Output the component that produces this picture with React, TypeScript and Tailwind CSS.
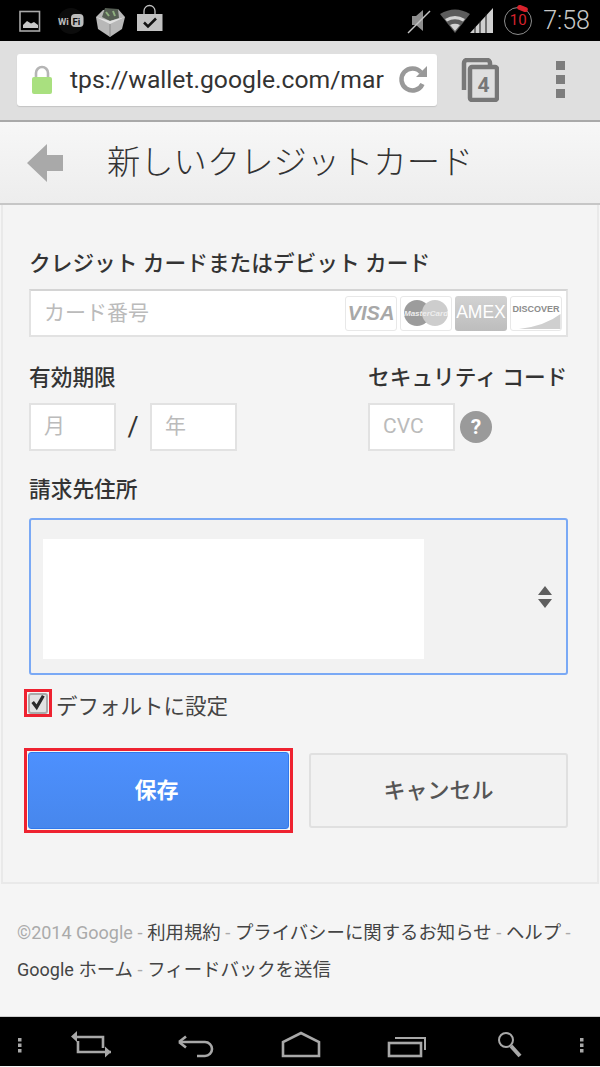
const font = { fontFamily: '"Roboto", "Noto Sans CJK JP", sans-serif' };

function StatusBar() {
  return (
    <div className="h-[41px] bg-black flex items-center shrink-0">
      {/* notification icons */}
      <svg width="200" height="41" viewBox="0 0 200 41" className="shrink-0">
        <rect x="20" y="11.5" width="19.5" height="19.5" fill="none" stroke="#a8a8a8" strokeWidth="1.6" />
        <path d="M23 28 v-3 l4 -4 l4 2.5 l3 -1.5 l4 3 v3z" fill="#c8c8c8" />
        <circle cx="71" cy="21" r="13" fill="#0c0c0c" />
        <text x="58" y="25" fontSize="9.5" fontWeight="700" fill="#bcbcbc" fontFamily="Roboto, sans-serif">Wi</text>
        <rect x="71" y="14" width="12.5" height="13" rx="4" fill="#bcbcbc" />
        <text x="72.5" y="25" fontSize="9.5" fontWeight="700" fill="#111" fontFamily="Roboto, sans-serif">Fi</text>
        <path d="M96 17 L103 10 L118 9 L125 17 L122 29 L110 37 L98 29z" fill="#b8b8b8" />
        <path d="M102 17 L105 8 L118 9 L119 18 L110 21z" fill="#565f54" />
        <path d="M106 12 l3 4 M113 11 l2 5" stroke="#8fb07f" strokeWidth="2" />
        <path d="M96 17 L110 24 L125 17 L110 21z" fill="#e2e2e2" />
        <path d="M110 24 V37" stroke="#8a8a8a" strokeWidth="1" />
        <path d="M137 14 H162.5 V31 H137z" fill="#c2c2c2" />
        <path d="M144 14 V11 a5.5 5.5 0 0 1 11 0 V14" fill="none" stroke="#c2c2c2" strokeWidth="1.3" />
        <path d="M144 22.5 L148 26.5 L156 18.5" fill="none" stroke="#111" strokeWidth="2.5" />
      </svg>
      <div className="flex-1" />
      {/* system icons */}
      <svg width="100" height="41" viewBox="0 0 100 41" className="shrink-0">
        <path d="M8 16 H12 L19 10 V31 L12 25 H8z" fill="#8e8e8e" />
        <path d="M4 33 L26 11" stroke="#c4c4c4" strokeWidth="1.4" />
        <path d="M36 14 Q51 5 66 14 L51 33z" fill="#5c5c5c" />
        <path d="M41 19 Q51 13 61 19 L59 21.5 Q51 17 43 21.5z" fill="#d4d4d4" />
        <path d="M46 25 Q51 22.5 56 25 L51 31z" fill="#d4d4d4" />
        <path d="M66 33 L89 8 V33z" fill="#d0d0d0" />
        <path d="M71 33 V26 M76 33 V21 M82 33 V13" stroke="#111" strokeWidth="1" />
      </svg>
      <div className="relative w-[28px] h-[28px] rounded-full border border-[#8d8d8d] flex items-center justify-center shrink-0 text-[#d8222c] text-[15px] leading-none">
        10
        <span className="absolute -top-[2px] left-[12px] w-[11px] h-[5px] rounded-full bg-[#d8222c] rotate-[20deg]" />
      </div>
      <span className="ml-[11px] mr-[10px] text-[#c8c8c8] text-[25px] font-light leading-none">7:58</span>
    </div>
  );
}

function BrowserBar() {
  return (
    <div className="h-[81px] bg-[#dfdfdf] border-b-[2px] border-[#a9a9a9] flex items-center shrink-0 pb-[2px]">
      <div className="ml-[17px] w-[420px] h-[52px] bg-white rounded-[3px] shadow-[0_1px_1px_#c4c4c4] flex items-center overflow-hidden">
        <svg width="22" height="31" viewBox="0 0 22 31" className="ml-[14px] shrink-0">
          <path d="M5 14 V9 a6 6 0 0 1 12 0 V14" fill="none" stroke="#b5b5b5" strokeWidth="2.6" />
          <rect x="1" y="13" width="20" height="17" rx="2" fill="#a9e07f" />
        </svg>
        <div className="ml-[17px] w-[315px] shrink-0 whitespace-nowrap text-[24.7px] leading-[30px] text-[#333]">
          tps://wallet.google.com/mar
        </div>
        <svg width="32" height="32" viewBox="0 0 32 32" className="ml-[12px] shrink-0">
          <path d="M25.5 20 A11 11 0 1 1 24 8.5" fill="none" stroke="#999" strokeWidth="4.5" />
          <path d="M19 13 H30 V2z" fill="#999" />
        </svg>
      </div>
      <svg width="38" height="44" viewBox="0 0 38 44" className="ml-[24px] shrink-0">
        <path d="M3 32 V5 a3 3 0 0 1 3 -3 H26 a3 3 0 0 1 3 3 V7" fill="none" stroke="#777" strokeWidth="4.5" />
        <rect x="9" y="9" width="27" height="33" rx="2" fill="#dfdfdf" stroke="#777" strokeWidth="4.5" />
        <text x="22.5" y="34" textAnchor="middle" fontSize="21" fontWeight="700" fill="#777" fontFamily="Roboto, sans-serif">4</text>
      </svg>
      <div className="ml-[57px] flex flex-col gap-[5px] shrink-0">
        <span className="w-[9px] h-[9px] bg-[#7d7d7d]" />
        <span className="w-[9px] h-[9px] bg-[#7d7d7d]" />
        <span className="w-[9px] h-[9px] bg-[#7d7d7d]" />
      </div>
    </div>
  );
}

function TitleBar() {
  return (
    <div className="h-[83px] border-b-[2px] border-[#c6c6c6] bg-gradient-to-b from-[#f7f7f7] to-[#ededed] flex items-center shrink-0">
      <svg width="36" height="38" viewBox="0 0 36 38" className="ml-[27px] shrink-0">
        <path d="M0 19 L20 0 V11 H36 V27 H20 V38z" fill="#a9a9a9" />
      </svg>
      <h1 className="ml-[44px] text-[33.3px] leading-none font-light text-[#333] whitespace-nowrap">新しいクレジットカード</h1>
    </div>
  );
}

function CardLogos() {
  const latin = { fontFamily: '"Liberation Sans", sans-serif' };
  return (
    <div className="flex gap-[3px] shrink-0 mr-[4px]">
      <div className="w-[52px] h-[35px] rounded-[3px] bg-white border border-[#e8e8e8] flex items-center justify-center text-[#a8a8a8] text-[20px] font-black italic leading-none" style={latin}>VISA</div>
      <div className="w-[52px] h-[35px] rounded-[3px] bg-white border border-[#e8e8e8] flex items-center justify-center">
        <svg width="44" height="26" viewBox="0 0 44 26">
          <circle cx="13" cy="13" r="13" fill="#9c9c9c" />
          <circle cx="31" cy="13" r="13" fill="#cdcdcd" />
          <text x="22" y="16" textAnchor="middle" fontSize="8" fontStyle="italic" fontWeight="700" fill="#eee" style={latin}>MasterCard</text>
        </svg>
      </div>
      <div className="w-[52px] h-[35px] rounded-[3px] bg-gradient-to-b from-[#d2d2d2] to-[#bdbdbd] flex items-center justify-center text-white text-[17.5px] leading-none" style={latin}>AMEX</div>
      <div className="relative w-[52px] h-[35px] rounded-[3px] bg-white border border-[#e8e8e8] flex justify-center pt-[8px] text-[#8c8c8c] text-[9px] font-bold leading-none" style={latin}>
        DISCOVER
        <svg width="50" height="33" viewBox="0 0 50 33" className="absolute left-0 top-0">
          <path d="M8 32 Q34 29 49.5 17 V32z" fill="#cfcfcf" />
        </svg>
      </div>
    </div>
  );
}

function Field({ placeholder }: { placeholder: string }) {
  return (
    <div className="w-[87px] h-[48px] bg-white border-2 border-[#e2e2e2] flex items-center pl-[13px] pb-[2px] text-[21px] text-[#bbb] leading-none">
      {placeholder}
    </div>
  );
}

function Form() {
  return (
    <div className="h-[679px] mx-[1px] bg-[#f4f4f4] border-x-2 border-b-2 border-[#e9e9e9] pl-[26px] pr-[29px] pt-[47px] shrink-0">
      <label className="block h-[24px] text-[21.7px] leading-[24px] font-medium text-[#333] whitespace-nowrap">クレジット カードまたはデビット カード</label>
      <div className="mt-[13px] h-[48px] bg-white border-2 border-[#e2e2e2] border-t-[#d4d4d4] flex items-center justify-between pl-[13px]">
        <span className="text-[21px] text-[#bbb] leading-none">カード番号</span>
        <CardLogos />
      </div>

      <div className="mt-[29px] flex justify-between">
        <div>
          <label className="block h-[24px] text-[21.7px] leading-[24px] font-medium text-[#333]">有効期限</label>
          <div className="mt-[13px] flex items-center">
            <Field placeholder="月" />
            <span className="w-[34px] text-center text-[#333] text-[27px] leading-none">/</span>
            <Field placeholder="年" />
          </div>
        </div>
        <div className="w-[200px]">
          <label className="block h-[24px] text-[21.7px] leading-[24px] font-medium text-[#333] whitespace-nowrap">セキュリティ コード</label>
          <div className="mt-[13px] flex items-center">
            <Field placeholder="CVC" />
            <span className="ml-[5px] w-[32px] h-[32px] rounded-full bg-[#9a9a9a] text-white text-[21px] font-bold leading-none flex items-center justify-center">?</span>
          </div>
        </div>
      </div>

      <label className="mt-[27px] block h-[24px] text-[21.7px] leading-[24px] font-medium text-[#333]">請求先住所</label>
      <div className="mt-[16px] h-[157px] rounded-[3px] border-2 border-[#7aa9f5] bg-[#f2f2f2] flex items-center pl-[12px] pr-[14px] pt-[4px]">
        <div className="w-[381px] h-[120px] bg-white" />
        <svg width="14" height="22" viewBox="0 0 14 22" className="ml-auto mb-[4px] shrink-0">
          <path d="M7 0 L14 9 H0z M0 13 H14 L7 22z" fill="#5f5f5f" />
        </svg>
      </div>

      <div className="mt-[14px] -ml-[5px] flex items-center h-[28px]">
        <div className="w-[28px] h-[28px] border-[3px] border-[#ee2230] flex items-center justify-center shrink-0">
          <div className="w-[20px] h-[21px] rounded-[3px] bg-[#e2e2e2] border-2 border-[#aaa] flex items-center justify-center">
            <svg width="18" height="18" viewBox="0 0 18 18" className="-mt-[3px]">
              <path d="M3 9 L7.5 15 L15 2" fill="none" stroke="#2a2a2a" strokeWidth="3.6" />
            </svg>
          </div>
        </div>
        <span className="ml-[4px] mt-[8px] text-[21.5px] leading-none text-[#444] whitespace-nowrap">デフォルトに設定</span>
      </div>

      <div className="mt-[31px] -ml-[5px] flex items-center">
        <div className="w-[269px] h-[85px] border-[3px] border-[#ee2230] p-[1px] shrink-0">
          <button className="w-full h-full rounded-[3px] bg-gradient-to-b from-[#4d90fe] to-[#4787ed] border border-[#3079ed] pr-[4px] text-white text-[22px] font-bold">保存</button>
        </div>
        <button className="ml-[16px] w-[259px] h-[75px] rounded-[3px] bg-[#f2f2f2] border-2 border-[#e0e0e0] text-[#555] text-[22px] font-medium">キャンセル</button>
      </div>
    </div>
  );
}

function Footer() {
  const sep = <span className="text-[#aaa]"> - </span>;
  return (
    <div className="h-[132px] bg-[#f5f5f5] pl-[17px] pr-[10px] pt-[30px] text-[18.4px] leading-[37px] text-[#444] shrink-0">
      <div className="whitespace-nowrap">
        <span className="text-[#aaa] text-[18px]">©2014 Google</span>{sep}利用規約{sep}プライバシーに関するお知らせ{sep}ヘルプ{sep}
      </div>
      <div className="whitespace-nowrap"><span className="text-[18px]">Google</span> ホーム{sep}フィードバックを送信</div>
    </div>
  );
}

function NavBar() {
  const stroke = { fill: "none", stroke: "#a8a8a8", strokeWidth: 2.6 };
  return (
    <div className="h-[50px] bg-black border-t border-[#cfcfcf] shrink-0">
      <svg width="600" height="49" viewBox="0 0 600 49" className="block">
        <rect x="18" y="21" width="3.5" height="3.5" fill="#a8a8a8" />
        <rect x="18" y="26.5" width="3.5" height="3.5" fill="#a8a8a8" />
        <rect x="18" y="32" width="3.5" height="3.5" fill="#a8a8a8" />
        <path d="M76 20 H103 V31 M111 35 H78 V24" {...stroke} />
        <path d="M71 19.5 L77 14 V25z M111 35 L105 29.5 V40.5z" fill="#a8a8a8" />
        <path d="M180 25 H205 a6.5 6.5 0 0 1 0 14 H197" {...stroke} />
        <path d="M179 25 L186 19.5 M179 25 L186 30.5" {...stroke} />
        <path d="M283 39 V25 L301 16 L319 25 V39z" {...stroke} />
        <rect x="389" y="26" width="32" height="13" {...stroke} />
        <path d="M395 21 H425 V33" {...stroke} strokeWidth={2} />
        <circle cx="506" cy="23" r="7" {...stroke} strokeWidth={2} />
        <path d="M511 29 L520 39" stroke="#a8a8a8" strokeWidth="4" />
        <rect x="580" y="21" width="3.5" height="3.5" fill="#a8a8a8" />
        <rect x="580" y="26.5" width="3.5" height="3.5" fill="#a8a8a8" />
        <rect x="580" y="32" width="3.5" height="3.5" fill="#a8a8a8" />
      </svg>
    </div>
  );
}

export default function App() {
  return (
    <div className="w-[600px] h-[1067px] flex flex-col overflow-hidden bg-[#f5f5f5]" style={font}>
      <StatusBar />
      <BrowserBar />
      <TitleBar />
      <Form />
      <Footer />
      <NavBar />
    </div>
  );
}
